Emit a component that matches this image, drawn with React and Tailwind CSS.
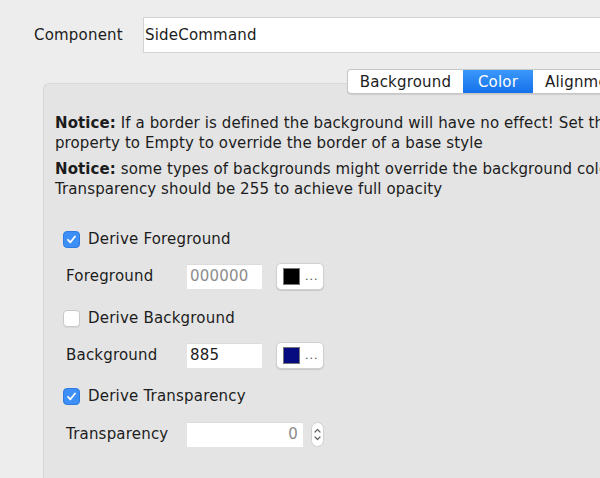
import React from 'react';

function Check({ checked }) {
  return checked ? (
    <span className="flex h-[17px] w-[17px] items-center justify-center rounded-[4px] bg-[#3b8ff6] border border-[#2f7be0]">
      <svg width="11" height="11" viewBox="0 0 11 11" fill="none">
        <path d="M2 5.8 L4.4 8.3 L9 2.5" stroke="white" strokeWidth="1.8" strokeLinecap="round" strokeLinejoin="round" />
      </svg>
    </span>
  ) : (
    <span className="h-[17px] w-[17px] rounded-[4px] bg-white border border-[#c9c9c9] shadow-[0_1px_1px_rgba(0,0,0,0.06)]" />
  );
}

function ColorButton({ color }) {
  return (
    <button className="ml-[14px] flex h-[27px] w-[48px] items-center rounded-[5px] border border-[#d0d0d0] bg-white pl-[6px] shadow-[0_1px_1px_rgba(0,0,0,0.12)]">
      <span className="h-[17px] w-[17px] border border-[#777]" style={{ backgroundColor: color }} />
      <span className="ml-[5px] text-[11px] leading-none tracking-[1px] text-[#444]">...</span>
    </button>
  );
}

export default function App() {
  return (
    <div className="h-[478px] w-[600px] overflow-hidden bg-[#ededed] text-[#1c1c1c] tracking-[0.2px]" style={{ fontFamily: '"DejaVu Sans", sans-serif' }}>
      {/* Component row */}
      <div className="flex items-center pt-[17px] pl-[34px]">
        <span className="w-[109px] text-[15px] pt-[1px]">Component</span>
        <div className="flex h-[36px] flex-1 items-center border border-r-0 border-[#d3d3d3] bg-white pl-[1px] pt-[1px] text-[15px]">SideCommand</div>
      </div>

      {/* Tab panel */}
      <div className="relative ml-[43px] mt-[30px] h-[400px] rounded-tl-[6px] border border-r-0 border-b-0 border-[#d8d8d8] bg-[#e4e4e4]">
        <div className="absolute left-[303px] top-[-15px] flex h-[25px] overflow-hidden rounded-l-[4px] border border-r-0 border-[#c6c6c6] bg-white text-[15px] shadow-[0_1px_1px_rgba(0,0,0,0.1)]">
          <div className="flex w-[115px] items-center justify-center pt-[1px]">Background</div>
          <div className="flex w-[70px] items-center justify-center bg-gradient-to-b from-[#3a98fc] to-[#1470e8] pt-[1px] text-white">Color</div>
          <div className="flex w-[120px] items-center pl-[12px] pt-[1px]">Alignment</div>
        </div>

        <div className="whitespace-nowrap pl-[11px] pt-[29px] text-[15px] leading-[20px] tracking-[0.1px]">
          <p><b>Notice:</b> If a border is defined the background will have no effect! Set the</p>
          <p>property to Empty to override the border of a base style</p>
          <p className="mt-[6px]"><b>Notice:</b> some types of backgrounds might override the background color</p>
          <p>Transparency should be 255 to achieve full opacity</p>
        </div>

        <div className="pl-[19px] text-[15px]">
          <div className="mt-[27px] flex h-[26px] items-center">
            <Check checked />
            <span className="ml-[8px] pt-[1px]">Derive Foreground</span>
          </div>
          <div className="mt-[11px] flex h-[26px] items-center pl-[3px]">
            <span className="w-[121px] pt-[1px]">Foreground</span>
            <div className="flex h-[25px] w-[75px] items-center border-t border-[#dcdcdc] bg-white pl-[3px] text-[#8c8c8c]">000000</div>
            <ColorButton color="#000000" />
          </div>
          <div className="mt-[16px] flex h-[26px] items-center">
            <Check />
            <span className="ml-[8px] pt-[1px]">Derive Background</span>
          </div>
          <div className="mt-[11px] flex h-[26px] items-center pl-[3px]">
            <span className="w-[121px] pt-[1px]">Background</span>
            <div className="flex h-[25px] w-[75px] items-center border-t border-[#dcdcdc] bg-white pl-[3px]">885</div>
            <ColorButton color="#060b80" />
          </div>
          <div className="mt-[15px] flex h-[26px] items-center">
            <Check checked />
            <span className="ml-[8px] pt-[1px]">Derive Transparency</span>
          </div>
          <div className="mt-[12px] flex h-[26px] items-center pl-[3px]">
            <span className="w-[121px] pt-[1px]">Transparency</span>
            <div className="flex h-[25px] w-[116px] items-center justify-end border-t border-[#dcdcdc] bg-white pr-[5px] text-[#8c8c8c]">0</div>
            <div className="ml-[8px] flex h-[25px] w-[13px] flex-col items-center justify-center rounded-full border border-[#d0d0d0] bg-white">
              <svg width="9" height="17" viewBox="0 0 9 17" fill="none">
                <path d="M2 6 L4.5 3.5 L7 6" stroke="#666" strokeWidth="1.2" strokeLinecap="round" strokeLinejoin="round" />
                <path d="M2 11 L4.5 13.5 L7 11" stroke="#666" strokeWidth="1.2" strokeLinecap="round" strokeLinejoin="round" />
              </svg>
            </div>
          </div>
        </div>
      </div>
    </div>
  );
}
